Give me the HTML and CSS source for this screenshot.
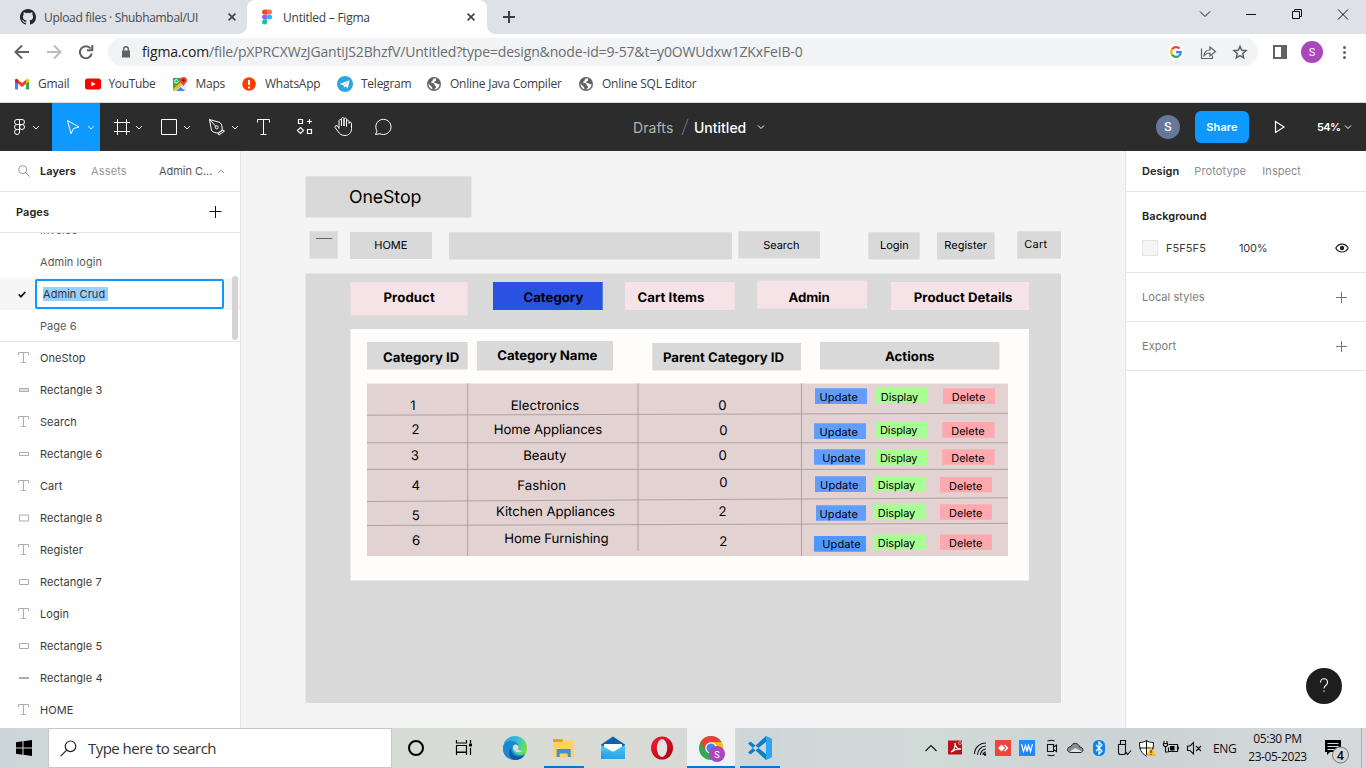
FILE: index.html
```html
<!DOCTYPE html>
<html lang="en">
<head>
<meta charset="utf-8">
<title>Untitled – Figma</title>
<link rel="stylesheet" href="styles.css">
</head>
<body>
<div class="screen">

<header class="tabstrip">
  <div class="tab tab-idle">
    <svg class="tab-icon" viewBox="0 0 16 16"><path fill="#24292f" fill-rule="evenodd" d="M8 0C3.58 0 0 3.58 0 8c0 3.54 2.29 6.53 5.47 7.59.4.07.55-.17.55-.38 0-.19-.01-.82-.01-1.49-2.01.37-2.53-.49-2.69-.94-.09-.23-.48-.94-.82-1.13-.28-.15-.68-.52-.01-.53.63-.01 1.08.58 1.23.82.72 1.21 1.87.87 2.33.66.07-.52.28-.87.51-1.07-1.78-.2-3.64-.89-3.64-3.95 0-.87.31-1.59.82-2.15-.08-.2-.36-1.02.08-2.12 0 0 .67-.21 2.2.82a7.6 7.6 0 0 1 4 0c1.53-1.04 2.2-.82 2.2-.82.44 1.1.16 1.92.08 2.12.51.56.82 1.27.82 2.15 0 3.07-1.87 3.75-3.65 3.95.29.25.54.73.54 1.48 0 1.07-.01 1.93-.01 2.2 0 .21.15.46.55.38A8.01 8.01 0 0 0 16 8c0-4.42-3.58-8-8-8z"/></svg>
    <span class="tab-title t1">Upload files · Shubhambal/UI</span>
    <svg class="tab-close" viewBox="0 0 8 8"><path d="M.6.6l6.8 6.8M7.4.6L.6 7.4"/></svg>
  </div>
  <div class="tab tab-active">
    <svg class="tab-icon" viewBox="0 0 16 16"><path fill="#f24e1e" d="M8 .5H5.5a2.5 2.5 0 0 0 0 5H8z"/><path fill="#ff7262" d="M8 .5h2.500a2.500 2.500 0 0 1 0 5H8z"/><path fill="#a259ff" d="M8 5.500H5.500a2.500 2.500 0 0 0 0 5H8z"/><circle cx="10.500" cy="8" r="2.500" fill="#1abcfe"/><path fill="#0acf83" d="M8 10.500H5.500A2.500 2.500 0 1 0 8 13z"/></svg>
    <span class="tab-title t2">Untitled – Figma</span>
    <svg class="tab-close" viewBox="0 0 8 8"><path d="M.6.6l6.8 6.8M7.4.6L.6 7.4"/></svg>
  </div>
  <svg class="new-tab" viewBox="0 0 12 12"><path d="M6 0v12M0 6h12"/></svg>
  <svg class="win-controls" viewBox="1190 0 176 34"><path d="M1200 11.500l5 5 5-5M1246 14.500h10M1292.500 11.500h7v7h-7zM1294.500 11.500v-2h7v7h-2M1338 9.500l10 10M1348 9.500l-10 10"/></svg>
</header>

<div class="navbar">
  <svg class="nav-icons" viewBox="0 34 108 35"><path stroke="#5f6368" d="M29 52H16M22 45.500L15.500 52l6.500 6.500"/><path stroke="#babcbe" d="M47 52h13M54 45.500l6.500 6.500-6.500 6.500"/><path stroke="#5f6368" d="M90.700 48.500a6 6 0 1 0 1.100 5M92.300 45v5.300H87"/></svg>
  <div class="omnibox">
    <svg class="lock" viewBox="0 0 10 12"><path fill="#5f6368" d="M1 4.500h8v7H1z"/><path fill="none" stroke="#5f6368" stroke-width="1.400" d="M2.700 5V3a2.300 2.300 0 0 1 4.600 0v2"/></svg>
    <span class="url"><b>figma.com</b>/file/pXPRCXWzJGantiJS2BhzfV/Untitled?type=design&amp;node-id=9-57&amp;t=y0OWUdxw1ZKxFeIB-0</span>
    <svg class="omni-icons" viewBox="1164 38 94 28"><circle cx="1176" cy="52" r="8" fill="#fff"/><g fill="none" stroke-width="2.200"><path stroke="#ea4335" d="M1172 49.300a4.800 4.800 0 0 1 7.600-.7"/><path stroke="#fbbc05" d="M1172 49.300a4.800 4.800 0 0 0 0 5.400"/><path stroke="#34a853" d="M1172 54.700a4.800 4.800 0 0 0 7 1.100"/><path stroke="#4285f4" d="M1179 55.800a4.800 4.800 0 0 0 1.800-3.600H1176"/></g><g fill="none" stroke="#5f6368" stroke-width="1.200"><path d="M1201.500 48.500v10h11v-3M1204 55.500c.5-4 3-5.500 6-5.500v-3l5.500 4.500-5.500 4.500v-3c-2.700 0-4.500.8-6 2.500z"/><path stroke-width="1.500" d="M1240 46.300l1.700 4 4.300.4-3.300 2.900 1 4.300-3.700-2.300-3.700 2.300 1-4.300-3.300-2.900 4.300-.4z"/></g></svg>
  </div>
  <svg class="nav-right" viewBox="1258 34 108 35"><path fill="#5f6368" fill-rule="evenodd" d="M1273 45h14v14h-14zm2 2v10h6V47z"/><circle cx="1312" cy="52" r="11" fill="#ab47bc"/><text x="1312" y="56" text-anchor="middle" class="avatar-letter">S</text><g fill="#5f6368"><circle cx="1344.500" cy="47.500" r="1.500"/><circle cx="1344.500" cy="52.500" r="1.500"/><circle cx="1344.500" cy="57.500" r="1.500"/></g></svg>
</div>

<nav class="bookmarks">
  <a><svg viewBox="0 0 16 16"><path fill="#4285f4" d="M1 4l3 2v7.500H1.700Q1 13.500 1 12.800z"/><path fill="#34a853" d="M15 4l-3 2v7.500h2.300q.7 0 .7-.7z"/><path fill="#ea4335" d="M4 3.800L8 7l4-3.200v4L8 11 4 7.800z"/><path fill="#c5221f" d="M1 4.500C1 2.500 3 2 4 3.800v4L1 5.800z"/><path fill="#fbbc04" d="M15 4.500c0-2-2-2.500-3-.7v4l3-2z"/></svg><span>Gmail</span></a>
  <a><svg viewBox="0 0 16 16"><rect x="0" y="2.500" width="16" height="11" rx="2.500" fill="#f00"/><path fill="#fff" d="M6.300 5.500v5L10.600 8z"/></svg><span class="b2">YouTube</span></a>
  <a><svg viewBox="0 0 16 16"><path fill="#34a853" d="M1 2h9l3 5L2 15H1z"/><path fill="#e8eaed" d="M3 15L12 6l3 8-1 1z"/><path fill="#fbbc04" d="M1 13L12 3l2 2L3 15H1z"/><path fill="#4285f4" d="M4 15l4.500-4L13 15z"/><circle cx="4.300" cy="5.300" r="1.700" fill="none" stroke="#fff"/><path fill="#ea4335" d="M11.500 1A3.500 3.500 0 0 1 15 4.500c0 2.500-2.700 3-3.500 6-.8-3-3.500-3.500-3.500-6A3.500 3.500 0 0 1 11.500 1z"/><circle cx="11.500" cy="4.300" r="1.300" fill="#811411"/></svg><span>Maps</span></a>
  <a><svg viewBox="0 0 16 16"><circle cx="8" cy="8" r="6.800" fill="#ff3d00"/><path stroke="#fff" stroke-width="2" d="M8 4v5M8 10.500v2"/></svg><span>WhatsApp</span></a>
  <a><svg viewBox="0 0 16 16"><circle cx="8" cy="8" r="8" fill="#2ca5e0"/><path fill="#fff" d="M2.700 8L12.500 4.200l-1.600 8-2.500-1.900-1.300 1.300-.5-2.300z"/><path stroke="#a9c9dd" d="M6.500 9.500L11 5.500"/></svg><span>Telegram</span></a>
  <a><svg viewBox="0 0 16 16"><circle cx="8" cy="8" r="7" fill="#5f6368"/><path fill="#fff" d="M8 2.500c-2 1-.5 2.500-3 3.500 0 2 3.500.5 3.500 2.500s2 1 1.500 3l-2 2c4 0 5.500-3 5.500-5.500-2 1-2-1-4-1S8 5 10 5V2.500zM2.500 7c0 4 1.500 5.500 4 6.300C7 10.500 3.500 10 2.500 7z"/></svg><span>Online Java Compiler</span></a>
  <a><svg viewBox="0 0 16 16"><circle cx="8" cy="8" r="7" fill="#5f6368"/><path fill="#fff" d="M8 2.500c-2 1-.5 2.500-3 3.500 0 2 3.500.5 3.500 2.500s2 1 1.500 3l-2 2c4 0 5.500-3 5.500-5.500-2 1-2-1-4-1S8 5 10 5V2.500zM2.500 7c0 4 1.500 5.500 4 6.300C7 10.500 3.500 10 2.500 7z"/></svg><span>Online SQL Editor</span></a>
</nav>

<div class="toolbar">
  <svg class="tool w52" viewBox="0 103 52 48"><path d="M19.500 119.500h-2.500a2.500 2.500 0 0 0 0 5h2.500zM19.500 119.500h2.500a2.500 2.500 0 0 1 0 5h-2.500M19.500 124.500h-2.500a2.500 2.500 0 0 0 0 5h2.500zM19.500 129.500h-2.500a2.500 2.500 0 1 0 2.500 2.500z"/><circle cx="22" cy="127" r="2.500"/><path d="M33 126l3 3 3-3"/></svg>
  <svg class="tool w48 tool-on" viewBox="52 103 48 48"><path d="M67.500 120.500l11.500 6.500-5.500 1.500-2.500 5.300zM88 126l3 3 3-3"/></svg>
  <svg class="tool w48" viewBox="100 103 48 48"><path d="M117.500 119v16M126.500 119v16M114 122.500h16M114 131.500h16M136 126l3 3 3-3"/></svg>
  <svg class="tool w48" viewBox="148 103 48 48"><path d="M161.500 119.500h15v15h-15zM184 126l3 3 3-3"/></svg>
  <svg class="tool w48" viewBox="196 103 48 48"><path d="M209.500 119.500l10.500 3c2 2 2.500 5 2 7.500l-3.500 3c-3 0-5-.5-7-2.500zM209.500 119.500l6.500 7M224.500 131l-5.500 4-1-1.500 5-3.500z"/><circle cx="216.700" cy="127.300" r="1.500"/><path d="M232 126l3 3 3-3"/></svg>
  <svg class="tool w39" viewBox="244 103 39 48"><path d="M257.500 122.500v-3h12v3M263.500 119.500v15M260.500 134.500h6"/></svg>
  <svg class="tool w42" viewBox="283 103 42 48"><path stroke-width="1.200" d="M298.500 119.500h4v4h-4zM307.500 129.500h4v4h-4zM300.500 127.500l3 3-3 3-3-3zM309.500 119v5M307 121.500h5"/></svg>
  <svg class="tool w37" viewBox="325 103 37 48"><path d="M339.500 129v-7.500c0-2 2.500-2 2.500 0v5-7c0-2 2.500-2 2.500 0v7-6.500c0-2 2.500-2 2.500 0v7-5c0-2 2.500-2 2.500 0v2c0-1.800 2.500-1.800 2.500 0v5c0 4-2.500 7-6.500 7-4 0-5.500-2-6.500-3.500l-3.500-4.500c-.5-2 2-2.500 3-1z" transform="translate(-.5 -.5)"/></svg>
  <svg class="tool w44" viewBox="362 103 44 48"><path d="M375.500 134.500l1.500-3.500a7.600 7.600 0 1 1 3 2.700z"/></svg>
  <div class="file-name"><span class="drafts">Drafts</span><svg class="slash" viewBox="0 0 8 18"><path d="M1 17L7 1"/></svg><span class="fname">Untitled</span><svg class="fcaret" viewBox="0 0 8 6"><path d="M1 1.500l3 3 3-3"/></svg></div>
  <div class="toolbar-right">
    <span class="user">S</span>
    <button class="share">Share</button>
    <svg class="play" viewBox="0 0 12 14"><path d="M1.500 1.500L10 7l-8.500 5.500z"/></svg>
    <span class="zoom">54%</span>
    <svg class="zcaret" viewBox="0 0 8 6"><path d="M1 1.500l3 3 3-3"/></svg>
  </div>
</div>

<main class="workspace">
  <aside class="left">
    <div class="left-tabs">
      <svg class="search-ic" viewBox="0 0 12 12"><circle cx="4.700" cy="4.700" r="4"/><path d="M7.700 7.700l4 4"/></svg>
      <span class="lt-on">Layers</span><span class="lt-off">Assets</span><span class="lt-page">Admin C...</span>
      <svg class="up" viewBox="0 0 8 5"><path d="M1 4l3-3 3 3"/></svg>
    </div>
    <div class="pages-head"><span>Pages</span><svg viewBox="0 0 12 12"><path d="M6.500 0v12M.500 5.500h12"/></svg></div>
    <div class="pages">
      <div class="page first">Invoice</div>
      <div class="page">Admin login</div>
      <div class="page current"><svg viewBox="0 0 8 7"><path d="M.7 3.500l2.200 2.200L7.300 1"/></svg><div class="rename"><mark>Admin Crud&nbsp;</mark></div></div>
      <div class="page">Page 6</div>
      <i class="scroll"></i>
    </div>
    <div class="layers">
      <div class="layer"><svg viewBox="0 0 12 12"><path d="M.5 3V.5h10V3M5.500.5v10M3 10.500h5"/></svg>OneStop</div>
      <div class="layer"><svg viewBox="0 0 12 12"><path fill="#e0e0e0" d="M1.500 4.500h9v3h-9z"/></svg>Rectangle 3</div>
      <div class="layer"><svg viewBox="0 0 12 12"><path d="M.5 3V.5h10V3M5.500.5v10M3 10.500h5"/></svg>Search</div>
      <div class="layer"><svg viewBox="0 0 12 12"><path d="M1.500 4.500h9v3h-9z"/></svg>Rectangle 6</div>
      <div class="layer"><svg viewBox="0 0 12 12"><path d="M.5 3V.5h10V3M5.500.5v10M3 10.500h5"/></svg>Cart</div>
      <div class="layer"><svg viewBox="0 0 12 12"><path d="M1.500 3h9v6h-9z"/></svg>Rectangle 8</div>
      <div class="layer"><svg viewBox="0 0 12 12"><path d="M.5 3V.5h10V3M5.500.5v10M3 10.500h5"/></svg>Register</div>
      <div class="layer"><svg viewBox="0 0 12 12"><path d="M1.500 3.500h9v5h-9z"/></svg>Rectangle 7</div>
      <div class="layer"><svg viewBox="0 0 12 12"><path d="M.5 3V.5h10V3M5.500.5v10M3 10.500h5"/></svg>Login</div>
      <div class="layer"><svg viewBox="0 0 12 12"><path d="M1.500 3.500h9v5h-9z"/></svg>Rectangle 5</div>
      <div class="layer"><svg viewBox="0 0 12 12"><path stroke-width="2" d="M1 6h10"/></svg>Rectangle 4</div>
      <div class="layer"><svg viewBox="0 0 12 12"><path d="M.5 3V.5h10V3M5.500.5v10M3 10.500h5"/></svg>HOME</div>
    </div>
  </aside>

  <svg class="canvas" viewBox="241 151 884 577">
    <g fill="#d9d9d9">
      <path d="M305.500 176.300h166v41.200h-166zM309.500 231.200h28.200v27.600h-28.200zM350 232h82v27h-82zM449 232.300h283v27.200H449zM738.300 231.300H820v27.200h-81.700zM868.300 232.300h51.400v27.200h-51.400zM937 232.300h57.700v27.200H937zM1017.300 231.200h43.600v27.500h-43.600zM305.500 273.500H1061V703H305.500z"/>
    </g>
    <path stroke="#666" d="M316 238.500h16.300"/>
    <path fill="#f6e3e8" d="M350.500 282.200h117.200v33.300H350.500zM625 282h109.800v28H625zM757.200 280.600H867v28H757.200zM891 282h138v28H891z"/>
    <path fill="#2952e3" d="M493 282h109.700v28H493z"/>
    <path fill="#fffdfc" d="M350.500 329H1029v251.500H350.500z"/>
    <path fill="#d9d9d9" d="M367 342h100.700v27.600H367zM477 341h136v29.500H477zM652.300 343h148.600v27.500H652.300zM820 342h179.500v27.600H820z"/>
    <path fill="#e2d2d2" d="M367 383.400h641V556H367z"/>
    <g class="rules"><path d="M467.600 383.400V556M638 383.400V551M801.500 383.400V556M367 415.200L1008 413.300M367 442.800h641M367 469.400h641M367 501.500L1008 497.800M367 525.500L1008 523.400"/></g>
    <text class="c-title" x="349" y="203.200" textLength="72.300">OneStop</text>
    <g class="c-small">
      <text x="374.300" y="249" textLength="33">HOME</text>
      <text x="763.200" y="248.700" textLength="36.300">Search</text>
      <text x="880" y="249.200" textLength="28.700">Login</text>
      <text x="944.300" y="249" textLength="42.700">Register</text>
      <text x="1024.300" y="248" textLength="22.700">Cart</text>
    </g>
    <g class="c-bold">
      <text x="383.500" y="301.500" textLength="51.300">Product</text>
      <text x="523.400" y="301.800" textLength="60">Category</text>
      <text x="637.500" y="301.500" textLength="67">Cart Items</text>
      <text x="788.500" y="301.500" textLength="41.300">Admin</text>
      <text x="913.800" y="301.500" textLength="98.700">Product Details</text>
      <text x="383" y="361.900" textLength="76.300">Category ID</text>
      <text x="497.300" y="359.800" textLength="100">Category Name</text>
      <text x="663" y="361.900" textLength="121">Parent Category ID</text>
      <text x="885" y="361.300" textLength="49.500">Actions</text>
    </g>
    <g class="c-cell">
      <text x="410.300" y="410">1</text><text x="411.500" y="434">2</text><text x="410.700" y="460.200">3</text><text x="411.500" y="490.300">4</text><text x="411.700" y="519.500">5</text><text x="412" y="544.600">6</text>
      <text x="510.700" y="410.300" textLength="68.500">Electronics</text>
      <text x="493.700" y="434.200" textLength="108.500">Home Appliances</text>
      <text x="523.300" y="459.500" textLength="43">Beauty</text>
      <text x="517.300" y="489.900" textLength="48.700">Fashion</text>
      <text x="495.900" y="516.400" textLength="119">Kitchen Appliances</text>
      <text x="504.200" y="543.100" textLength="104.300">Home Furnishing</text>
      <text x="718.200" y="410">0</text><text x="719.200" y="435.200">0</text><text x="718.500" y="460.200">0</text><text x="719.200" y="487">0</text><text x="718.500" y="516">2</text><text x="719.300" y="545.800">2</text>
    </g>
    <g fill="#619dff"><path d="M815 388.200h52v15.700h-52zM814 423.300h52V439h-52zM814 449.200h51v15.600h-51zM815 476.300h51V492h-51zM816 505.200h50v15.600h-50z"/><path fill="#5096ff" d="M814 536h52v15.700h-52z"/></g>
    <path fill="#a8ff93" d="M875.400 388h52.300v16h-52.300zM875.300 422h52v15.800h-52zM875.300 449.200h52V465h-52zM873 476.500h52v15.600h-52zM873 504.200h52v15.600h-52zM873 534.200h52V550h-52z"/>
    <path fill="#ffa9ae" d="M943 388.200h52v15.700h-52zM942.200 422h52.400v15.800h-52.400zM942.200 449.200h52.400v15.600h-52.400zM940 477h52v15.300h-52zM940 504.200h52v15.600h-52zM940 534.400h52V550h-52z"/>
    <g class="c-small c-btn">
      <text x="819.500" y="400.600" textLength="38.300">Update</text><text x="819.500" y="435.500" textLength="38.300">Update</text><text x="822.300" y="462.200" textLength="38.300">Update</text><text x="820.100" y="489.300" textLength="38.300">Update</text><text x="819.500" y="517.500" textLength="38.300">Update</text><text x="822.300" y="548" textLength="38.300">Update</text>
      <text x="880.800" y="400.600" textLength="37.500">Display</text><text x="880" y="434.400" textLength="37.500">Display</text><text x="880" y="461.500" textLength="37.500">Display</text><text x="877.800" y="489.300" textLength="37.500">Display</text><text x="877.800" y="516.600" textLength="37.500">Display</text><text x="877.800" y="547.200" textLength="37.500">Display</text>
      <text x="951.800" y="401" textLength="33.500">Delete</text><text x="951.200" y="434.900" textLength="33.500">Delete</text><text x="951.200" y="462.200" textLength="33.500">Delete</text><text x="949" y="489.900" textLength="33.500">Delete</text><text x="949" y="517" textLength="33.500">Delete</text><text x="949" y="547.400" textLength="33.500">Delete</text>
    </g>
  </svg>

  <aside class="right">
    <div class="right-tabs"><b>Design</b><span class="proto">Prototype</span><span>Inspect</span></div>
    <section class="bg-sec">
      <h3>Background</h3>
      <div class="bg-row"><i class="swatch"></i><span class="hex">F5F5F5</span><span class="pct">100%</span><svg viewBox="0 0 14 10"><path fill="none" stroke="#222" stroke-width="1.200" d="M.8 5C3.500-.3 10.500-.3 13.200 5 10.500 10.300 3.500 10.300.8 5z"/><circle cx="7" cy="5" r="2.200" fill="#222"/></svg></div>
    </section>
    <section class="row-sec"><span>Local styles</span><svg viewBox="0 0 11 11"><path d="M5.500 0v11M0 5.500h11"/></svg></section>
    <section class="row-sec"><span>Export</span><svg viewBox="0 0 11 11"><path d="M5.500 0v11M0 5.500h11"/></svg></section>
    <div class="help"><svg viewBox="0 0 12 18"><path d="M2.500 5.500c0-5 7-5 7 0 0 3-3.500 3-3.500 6M6 13.500v1.300"/></svg></div>
  </aside>
</main>

<footer class="taskbar">
  <div class="start"><svg viewBox="0 0 16 16"><path d="M0 2.300l6.500-1v6.200H0zM7.500 1.200L16 0v7.500H7.500zM0 8.500h6.500v6.200l-6.500-1zM7.500 8.500H16V16l-8.500-1.200z"/></svg></div>
  <div class="task-search"><svg viewBox="0 0 17 17"><circle cx="10.500" cy="6.300" r="5.300"/><path d="M6.700 10.200L.7 16.200"/></svg><span>Type here to search</span></div>
  <svg class="apps" viewBox="392 728 400 40">
    <defs>
      <linearGradient id="edge" x1="0" y1="0" x2="1" y2=".3"><stop offset="0" stop-color="#1b9de2"/><stop offset=".6" stop-color="#35c1d5"/><stop offset="1" stop-color="#6be04b"/></linearGradient>
      <linearGradient id="ml" x1="0" y1="0" x2="0" y2="1"><stop offset="0" stop-color="#50d9ff"/><stop offset="1" stop-color="#1890df"/></linearGradient>
      <linearGradient id="op" x1="0" y1="0" x2="1" y2="1"><stop offset="0" stop-color="#ff1b2d"/><stop offset="1" stop-color="#a70014"/></linearGradient>
    </defs>
    <path fill="#f0f2f2" d="M687 728h48v40h-48z"/><path fill="#cfd6d8" d="M740 728h40v40h-40z"/>
    <path fill="#0078d7" d="M544 766h40v2h-40zM687 766h48v2h-48zM740 766h40v2h-40z"/>
    <circle cx="416" cy="748" r="7" fill="none" stroke="#000" stroke-width="2"/>
    <path fill="none" stroke="#000" stroke-width="1.200" d="M456.500 740v3h10v-3M456.500 745.500h10v6.500h-10zM456.500 755v-2.500h10v2.500M470.500 740v3M470.500 748v7"/><path d="M469 743.500h3v3h-3z"/>
    <circle cx="515" cy="748" r="12" fill="url(#edge)"/><path fill="#1b86d3" d="M503 749c0-6 5-9 10-8 3 .5 5 2.500 5.500 5-1.500-1.500-4-2-5.500 0-2.500 4 1.500 9 7 9 2 0 3.500-.4 5-1.200-2.500 4.200-6 6.200-10 6.200-7 0-12-5-12-11z"/><path fill="#0c59a4" d="M511.500 748c-1.500 6 4 9 8.500 8.500 2 0 3.800-.8 5-1.700-2.500 3.700-6 5.200-10 5.200-5.500-1-8-8-3.500-12z"/><path fill="#d9dcd7" d="M515 744.500c3 0 4.500 2.500 2.800 4.800 1 1.500 3.500 1.700 5.500 1.200-4 3.500-10.300 1.500-10.300-3 0-1.500.8-2.700 2-3z"/>
    <path fill="#e5a50a" d="M553 739h9l2 2.500v2h-11z"/><path fill="#ffd35c" d="M553 742h9l1.500-1.500H574v17h-21z"/><path fill="#3f91d7" d="M556.700 749h14v8h-3v-3.500h-8v3.500h-3z"/>
    <path fill="#0f62ad" d="M601 744.500l12-8 12 8v6h-24z"/><path fill="#fff" d="M604 744h18v7h-18z"/><path fill="url(#ml)" d="M601 745l12 7 12-7v14h-24z"/><path fill="#35b8f1" d="M601 759l12-7 12-7v14z" opacity=".5"/>
    <ellipse cx="662" cy="748" rx="11" ry="11.500" fill="url(#op)"/><ellipse cx="662" cy="748" rx="5.200" ry="9" fill="#e4e5e2"/>
    <circle cx="711" cy="748" r="12" fill="#34a853"/><path fill="#ea4335" d="M700.600 742a12 12 0 0 1 20.800 0H711l-5.200 9z"/><path fill="#fbbc04" d="M721.400 742a12 12 0 0 1-10.400 18l5.200-9-5.200-9z"/><circle cx="711" cy="748" r="5.800" fill="#fff"/><circle cx="711" cy="748" r="4.600" fill="#4285f4"/><circle cx="717" cy="754" r="8" fill="#ab47bc"/><text x="717" y="757.500" text-anchor="middle" class="badge-s">S</text>
    <path fill="#0c7fc9" d="M748 743.500l2.500-2L766 754v6zM748 752.500l2.500 2L766 742v-6z"/><path fill="#2aa7f0" d="M766 736l6 2.700v18.600l-6 2.700z"/>
  </svg>
  <svg class="tray" viewBox="920 728 284 40">
    <path class="ln" d="M925.500 751l5.500-5.500 5.500 5.500"/>
    <path fill="#b71318" d="M948 740.500h14v14h-14z"/><path fill="none" stroke="#fff" stroke-width="1.200" d="M951 752c3-1.500 5-6 4-9 0 4 3 6.500 6 6-3-.5-7 1-10 3z"/><circle cx="960" cy="743" r="1.500" fill="none" stroke="#f0b0b0" stroke-width=".8"/>
    <path class="ln" d="M974.500 754c0-6 5-11 11.500-11M977.500 755c0-5 4-9 8.500-9M980.500 755c0-3 2.500-6 5.500-6M983 755c0-2 1.500-3 3-3"/><circle cx="985" cy="754.500" r="1.200"/>
    <path fill="#ef443b" d="M995 740h16v16h-16z"/><path fill="#fff" d="M1001.500 744.500l3.500 3.500-3.500 3.500-3.500-3.500zM1004 745.500l1-1 3.500 3.500-3.500 3.500-1-1 2.500-2.500z"/>
    <path fill="#1f87ff" d="M1019 740h16v16h-16z"/><path fill="none" stroke="#fff" stroke-width="1.200" d="M1021.500 744l2 7.500 2-6 1.500 6 1.500-6 2 6 2-7.500"/>
    <path class="ln" d="M1047.500 744.500h6v7h-6zM1053.500 747l3-2v6.500l-3-2M1047.500 741c3-1 5-1 7 0M1047.500 755c3 1 5 1 7 0"/>
    <path fill="#8c8c8c" stroke="#222" d="M1071 752.500c-5-.5-4.500-5.500 0-6 1.500-4.500 7.500-4 8.500.5 4.500 0 4.500 5.500.5 5.500z"/><path fill="#e5e5e5" d="M1069.500 752l5.500-4 7 3.500-1 .5z"/>
    <rect x="1093" y="740" width="12" height="16" rx="5.500" fill="#0a84e8"/><path fill="none" stroke="#fff" stroke-width="1.200" d="M1096 745l6 6-3 3v-12l3 3-6 6"/>
    <path class="ln" d="M1119.500 744.500h6v8q0 2-2 2h-3q-2 0-2-2v-8zM1120.500 744v-3.500h5v3.500M1126 752l1.500 2.500 3.500-4"/>
    <path fill="#fff" stroke="#111" d="M1139.500 742.500c3 0 5-.5 7-2 2 1.500 4 2 7 2 0 7-1.500 10.500-7 13.500-5.500-3-7-6.500-7-13.500zM1146.500 740.500V756M1139.500 748h14"/><path fill="#fdbb11" d="M1151 746.500l5 9.500h-10z"/><path stroke="#222" d="M1151 750v3M1151 754v1"/>
    <path class="ln" d="M1168.500 744.500h9v7h-9v-4M1178.500 746.500v3M1164 741v3M1167 741v3M1163.500 743.500h4v2l-2 1.500-2-1.500zM1165.500 747v5h3"/><path d="M1170 746h4.500v4.500h-4.500z"/>
    <path class="ln" d="M1187.500 746h2.500l3.500-3.500v11.500l-3.500-3.500h-2.500zM1196 746l5 5M1201 746l-5 5"/>
  </svg>
  <span class="eng">ENG</span>
  <div class="clock"><span>05:30 PM</span><span>23-05-2023</span></div>
  <svg class="notif" viewBox="1310 728 56 40"><path d="M1325 740h16v12h-11l-3 3v-3h-2z"/><path stroke="#d5dadb" d="M1327.500 743.500h11M1327.500 746.500h11M1327.500 749.500h7"/><circle cx="1340.500" cy="755" r="8" fill="#d3d6d6" stroke="#777"/><text x="1340.500" y="759.500" text-anchor="middle" class="count">4</text><path stroke="#aab0b1" d="M1361.500 728v40"/></svg>
</footer>

</div>
</body>
</html>
```

FILE: styles.css
```css
* { box-sizing: border-box; }
body { margin: 0; overflow: hidden; font-family: Inter, "Liberation Sans", sans-serif; font-size: 11px; color: #3b3b3b; }
svg { display: block; flex: none; }
span, b { white-space: nowrap; }
.screen { width: 1366px; height: 768px; display: flex; flex-direction: column; }

/* browser chrome */
.tabstrip, .navbar, .bookmarks, .taskbar { font-family: "Open Sans", "Noto Sans", sans-serif; }
.tabstrip { height: 34px; background: #dee1e6; display: flex; align-items: center; }
.tab { height: 34px; display: flex; align-items: center; font-size: 12px; color: #45494d; }
.tab-idle { width: 247px; padding-left: 20px; }
.tab-active { width: 240px; padding-left: 12px; background: #fff; border-radius: 8px 8px 0 0; position: relative; color: #3c4043; }
.tab-active::before, .tab-active::after { content: ""; position: absolute; bottom: 0; width: 8px; height: 8px; }
.tab-active::before { left: -8px; background: radial-gradient(circle at 0 0, transparent 7.500px, #fff 8px); }
.tab-active::after { right: -8px; background: radial-gradient(circle at 100% 0, transparent 7.500px, #fff 8px); }
.tab-icon { width: 16px; height: 16px; margin-right: 8px; }
.tab-title { width: 184px; }
.t1 { letter-spacing: -0.31px; }
.t2 { letter-spacing: -0.24px; }
.tab-close { width: 8px; height: 8px; stroke: #3c4043; stroke-width: 1.600; fill: none; }
.new-tab { width: 12px; height: 12px; margin-left: 16px; stroke: #3c4043; stroke-width: 2; }
.win-controls { width: 176px; height: 34px; margin-left: auto; fill: none; stroke: #111; stroke-width: 1; }
.navbar { height: 35px; background: #fff; display: flex; align-items: center; }
.nav-icons { width: 108px; height: 35px; fill: none; stroke-width: 2; }
.omnibox { width: 1150px; height: 28px; border-radius: 14px; background: #f1f3f4; display: flex; align-items: center; padding-left: 13px; }
.lock { width: 10px; height: 12px; }
.url { margin-left: 11px; font-size: 14px; color: #6a6d71; letter-spacing: -0.155px; }
.url b { font-weight: 400; color: #202124; }
.omni-icons { width: 94px; height: 28px; margin-left: auto; }
.nav-right { width: 108px; height: 35px; }
.avatar-letter { fill: #fff; font: 11px Roboto, sans-serif; }
.bookmarks { height: 34px; padding-bottom: 4px; background: #fff; border-bottom: 1px solid #dadce0; padding-left: 14px; display: grid; grid-template-columns: 70.500px 87px 69.500px 96px 89px 152px 160px; align-items: center; }
.bookmarks a { display: flex; align-items: center; gap: 8px; font-size: 12px; color: #3c4043; }
.bookmarks svg { width: 16px; height: 16px; }
.bookmarks span { letter-spacing: -0.25px; }
.bookmarks .b2 { letter-spacing: -0.35px; }

/* editor toolbar */
.toolbar { height: 48px; background: #2c2c2c; display: flex; align-items: center; }
.tool { height: 48px; fill: none; stroke: #fff; stroke-width: 1; }
.tool-on { background: #0d99ff; }
.w52 { width: 52px; } .w48 { width: 48px; } .w39 { width: 39px; } .w42 { width: 42px; } .w37 { width: 37px; } .w44 { width: 44px; }
.file-name { margin-left: 227px; display: flex; align-items: center; font-size: 14px; color: #fff; }
.drafts { width: 48px; color: #b3b3b3; letter-spacing: .1px; }
.slash { width: 8px; height: 18px; stroke: #777; fill: none; }
.fname { margin-left: 5px; width: 63px; font-weight: 500; }
.fcaret, .zcaret { width: 8px; height: 6px; fill: none; stroke: #fff; }
.toolbar-right { margin-left: auto; display: flex; align-items: center; color: #fff; padding-right: 14px; }
.user { width: 24px; height: 24px; border-radius: 50%; background: #667799; text-align: center; line-height: 24px; font-size: 12px; font-weight: 500; }
.share { margin-left: 15px; width: 54px; height: 32px; padding: 0; border: 0; border-radius: 6px; background: #0d99ff; color: #fff; font: 600 11px Inter, sans-serif; letter-spacing: .1px; }
.play { width: 12px; height: 14px; margin-left: 25px; fill: none; stroke: #fff; stroke-width: 1.200; }
.zoom { margin-left: 31px; width: 27px; font-weight: 600; letter-spacing: -0.6px; }

/* workspace */
.workspace { height: 577px; display: flex; }
.left { width: 241px; background: #fff; border-right: 1px solid #e5e5e5; letter-spacing: .055px; overflow: hidden; }
.left-tabs { height: 41px; border-bottom: 1px solid #e5e5e5; padding-left: 18px; display: flex; align-items: center; }
.search-ic { width: 12px; height: 12px; fill: none; stroke: #999; }
.lt-on { margin-left: 10px; width: 51px; font-weight: 600; color: #222; }
.lt-off { width: 68px; color: #999; letter-spacing: .15px; }
.lt-page { width: 58px; color: #555; letter-spacing: -0.05px; }
.up { width: 8px; height: 5px; fill: none; stroke: #999; }
.pages-head { height: 41px; border-bottom: 1px solid #e5e5e5; padding: 0 19px 0 16px; display: flex; align-items: center; justify-content: space-between; font-weight: 600; color: #222; }
.pages-head svg { width: 12px; height: 12px; stroke: #111; stroke-width: 1; overflow: visible; }
.pages { height: 109px; border-bottom: 1px solid #e5e5e5; overflow: hidden; position: relative; }
.page { height: 32px; padding-left: 40px; line-height: 32px; color: #5a5a5a; }
.first { margin-top: -19px; }
.current { background: #f5f5f5; display: flex; align-items: center; padding-left: 18px; }
.current svg { width: 8px; height: 7px; fill: none; stroke: #111; stroke-width: 1.700; }
.rename { margin-left: 9px; width: 189px; height: 30px; border: 2px solid #0d99ff; border-radius: 2px; background: #fff; display: flex; align-items: center; padding-left: 6px; }
.rename mark { background: #99cfff; color: #333; line-height: 14px; }
.scroll { position: absolute; right: 2px; top: 43px; width: 6px; height: 64px; border-radius: 3px; background: #d4d4d4; }
.layer { height: 32px; padding-left: 18px; display: flex; align-items: center; }
.layer svg { width: 12px; height: 12px; margin-right: 10px; fill: none; stroke: #adadad; }
.canvas { width: 884px; height: 577px; background: #f4f4f4; }
.rules { fill: none; stroke: #a89c9e; stroke-width: .9; }
.canvas text { font-family: Inter, sans-serif; fill: #000; text-rendering: geometricPrecision; }
.canvas .c-title { font-size: 17.800px; }
.canvas .c-small { font-size: 11px; }
.canvas .c-bold { font-size: 13.200px; font-weight: 700; }
.canvas .c-cell { font-size: 13.200px; }

/* inspector */
.right { width: 241px; background: #fff; border-left: 1px solid #e5e5e5; letter-spacing: .055px; position: relative; }
.right-tabs { height: 41px; border-bottom: 1px solid #e5e5e5; padding-left: 16px; display: flex; align-items: center; gap: 15px; color: #8c8c8c; }
.right-tabs b { font-weight: 600; color: #222; }
.proto { width: 53px; letter-spacing: .1px; }
.bg-sec { height: 81px; border-bottom: 1px solid #e5e5e5; padding: 16px 17px 0 16px; }
.bg-sec h3 { margin: 0 0 16px; font-size: 11px; font-weight: 600; line-height: 16px; color: #222; }
.bg-row { height: 16px; display: flex; align-items: center; }
.swatch { width: 16px; height: 16px; background: #f5f5f5; border: 1px solid #e2e2e2; }
.hex { margin-left: 8px; width: 73px; }
.pct { letter-spacing: -0.2px; }
.bg-row svg { width: 14px; height: 10px; margin-left: auto; }
.row-sec { height: 49px; border-bottom: 1px solid #e5e5e5; padding: 0 19px 0 16px; display: flex; align-items: center; justify-content: space-between; color: #7d7d7d; }
.row-sec svg { width: 11px; height: 11px; stroke: #777; }
.help { position: absolute; right: 24px; bottom: 24px; width: 36px; height: 36px; border-radius: 50%; background: #1e1e1e; display: flex; align-items: center; justify-content: center; }
.help svg { width: 12px; height: 18px; fill: none; stroke: #fff; stroke-width: 1.100; }

/* taskbar */
.taskbar { height: 40px; background: linear-gradient(90deg, #ccd6d8 0, #d7dbd6 30%, #dadbd5 45%, #d0d7d8 58%, #d0dad7 68%, #ccd3d4 82%, #d5d9dc 100%); display: flex; align-items: center; color: #111; }
.start { width: 48px; padding-left: 16px; }
.start svg { width: 16px; height: 16px; }
.task-search { width: 344px; height: 40px; border: 1px solid #c3c7c7; background: #fff; display: flex; align-items: center; padding-left: 11px; }
.task-search svg { width: 17px; height: 17px; fill: none; stroke: #222; stroke-width: 1.200; }
.task-search span { margin-left: 11px; font-size: 15px; color: #333; letter-spacing: -0.53px; }
.apps { width: 400px; height: 40px; }
.badge-s { fill: #fff; font: 9px Roboto, sans-serif; }
.tray { width: 284px; height: 40px; margin-left: 128px; }
.ln { fill: none; stroke: #111; stroke-width: 1.100; }
.eng { margin-left: 9px; width: 30px; font-size: 12px; letter-spacing: -0.4px; }
.clock { width: 67px; padding-left: 2px; display: flex; flex-direction: column; align-items: center; font-size: 12px; line-height: 18px; margin-top: -1px; letter-spacing: -0.4px; }
.notif { width: 56px; height: 40px; }
.count { font: 600 12px "Open Sans", sans-serif; }
```
